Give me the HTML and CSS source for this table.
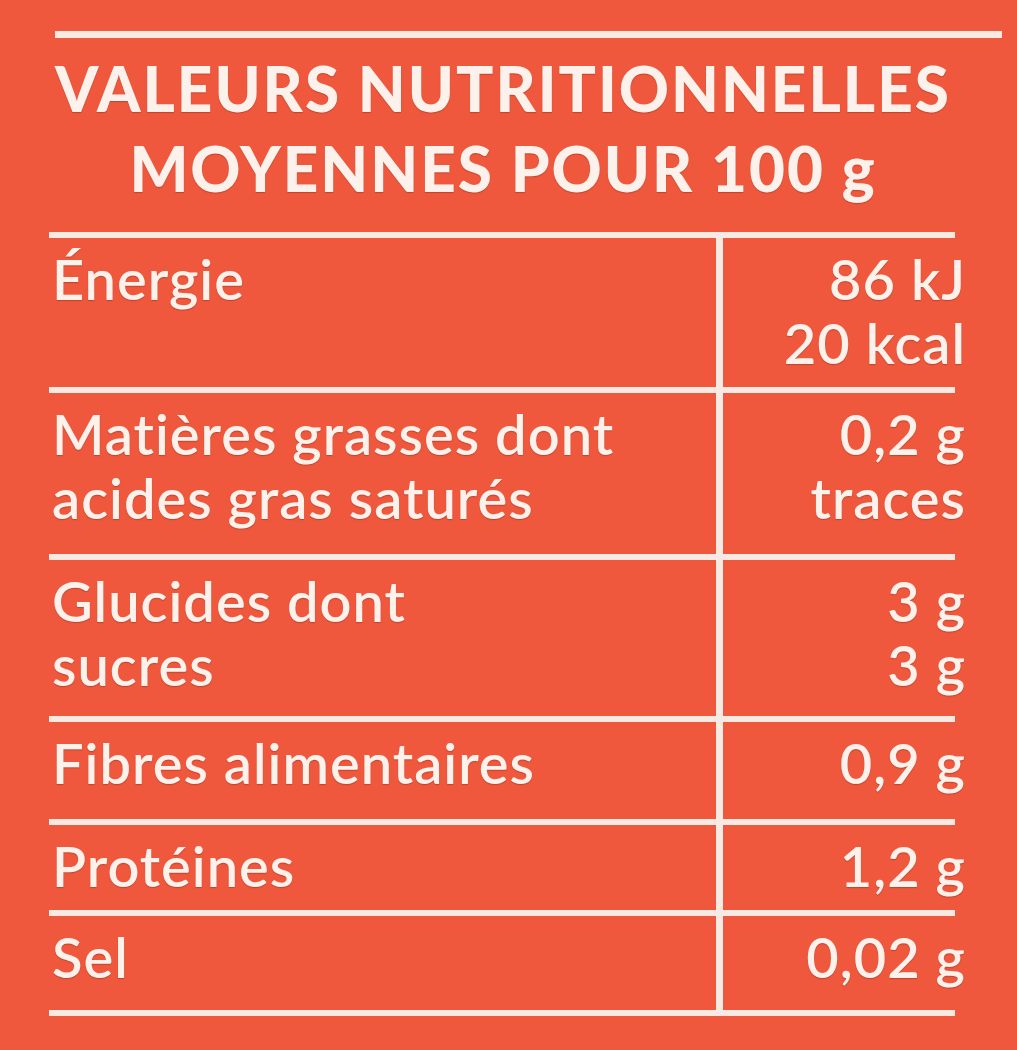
FILE: index.html
```html
<!DOCTYPE html>
<html lang="fr">
<head>
<meta charset="utf-8">
<title>Valeurs nutritionnelles</title>
<link rel="stylesheet" href="styles.css">
</head>
<body>
<main class="label">
  <div class="rule-top"></div>
  <h1 class="title">
    <span class="title-line">VALEURS NUTRITIONNELLES</span>
    <span class="title-line">MOYENNES POUR 100 g</span>
  </h1>
  <div class="table">
    <div class="row row-energy">
      <div class="name">Énergie</div>
      <div class="value"><div class="val-text">86 kJ<br>20 kcal</div></div>
    </div>
    <div class="row row-fat">
      <div class="name">Matières grasses dont<br>acides gras saturés</div>
      <div class="value"><div class="val-text">0,2 g<br>traces</div></div>
    </div>
    <div class="row row-carb">
      <div class="name">Glucides dont<br>sucres</div>
      <div class="value"><div class="val-text">3 g<br>3 g</div></div>
    </div>
    <div class="row row-fibre">
      <div class="name">Fibres alimentaires</div>
      <div class="value"><div class="val-text">0,9 g</div></div>
    </div>
    <div class="row row-prot">
      <div class="name">Protéines</div>
      <div class="value"><div class="val-text">1,2 g</div></div>
    </div>
    <div class="row row-salt">
      <div class="name">Sel</div>
      <div class="value"><div class="val-text">0,02 g</div></div>
    </div>
  </div>
</main>
</body>
</html>
```
FILE: styles.css
```css
html, body {
  margin: 0;
  padding: 0;
}
body {
  background: #ef583c;
  min-height: 1050px;
  color: #fdf1ec;
  font-family: Lato, "Open Sans", sans-serif;
}
.label {
  width: 1017px;
  height: 1050px;
  overflow: hidden;
  padding-top: 31px;
  box-sizing: border-box;
}
.rule-top {
  margin-left: 55px;
  width: 947px;
  height: 7px;
  background: #f8e9e3;
}
.title {
  margin: 10px 0 24px 0;
  width: 1006px;
  text-align: center;
  font-family: Lato, sans-serif;
  font-weight: 900;
  font-size: 62px;
  line-height: 80px;
  letter-spacing: 2px;
  text-shadow: 0 1px 1px rgba(110, 30, 20, 0.35);
}
.title-line {
  display: block;
}
.table {
  margin-left: 49px;
  width: 906px;
  border-bottom: 6px solid #f8e9e3;
}
.row {
  display: flex;
  border-top: 6px solid #f8e9e3;
  box-sizing: border-box;
}
.name,
.value {
  padding-top: 9px;
  font-size: 56px;
  font-weight: 600;
  line-height: 64px;
  letter-spacing: 1px;
  text-shadow: 0 1px 1px rgba(110, 30, 20, 0.35);
}
.name {
  width: 664px;
  flex: none;
  border-right: 7px solid #f8e9e3;
  padding-left: 3px;
}
.value {
  flex: 1;
  text-align: right;
}
.val-text {
  margin-right: -11px;
}
.row-energy { height: 155px; }
.row-fat { height: 167px; }
.row-carb { height: 162px; }
.row-fibre { height: 103px; }
.row-prot { height: 91px; }
.row-salt { height: 100px; }
```
